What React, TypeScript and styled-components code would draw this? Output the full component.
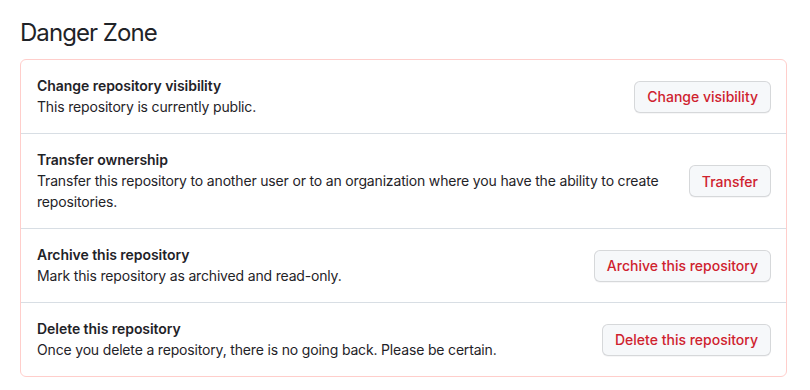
import React from 'react'
import styled, { createGlobalStyle } from 'styled-components'

const GlobalStyle = createGlobalStyle`
  body {
    margin: 0;
    background: #ffffff;
    font-family: Inter, "Noto Sans", "Liberation Sans", sans-serif;
    color: #1f2328;
  }
`

const Page = styled.div`
  padding: 15px 23px 0 20px;
`

const Heading = styled.h2`
  margin: 0 0 8px;
  font-size: 24px;
  font-weight: 400;
  line-height: 36px;
  letter-spacing: -0.95px;
`

const Box = styled.div`
  border: 1px solid #ffcecb;
  border-radius: 6px;
`

const Row = styled.div`
  display: flex;
  align-items: center;
  gap: 16px;
  padding: 16px 15px 16px 16px;
  & + & {
    border-top: 1px solid #d8dee4;
  }
`

const Info = styled.div`
  flex: 1;
  font-size: 14px;
`

const Title = styled.div`
  font-weight: 600;
  line-height: 20px;
  letter-spacing: -0.05px;
`

const Desc = styled.div`
  font-weight: 400;
  line-height: 21px;
  letter-spacing: -0.17px;
`

const DangerButton = styled.button`
  flex-shrink: 0;
  height: 32px;
  padding: 0 12px;
  font-family: inherit;
  font-size: 14px;
  font-weight: 500;
  color: #cf222e;
  background: #f6f8fa;
  border: 1px solid rgba(31, 35, 40, 0.15);
  border-radius: 6px;
  box-shadow: 0 1px 0 rgba(31, 35, 40, 0.04);
  cursor: pointer;
`

const rows = [
  {
    title: 'Change repository visibility',
    desc: 'This repository is currently public.',
    action: 'Change visibility',
  },
  {
    title: 'Transfer ownership',
    desc: 'Transfer this repository to another user or to an organization where you have the ability to create repositories.',
    action: 'Transfer',
  },
  {
    title: 'Archive this repository',
    desc: 'Mark this repository as archived and read-only.',
    action: 'Archive this repository',
  },
  {
    title: 'Delete this repository',
    desc: 'Once you delete a repository, there is no going back. Please be certain.',
    action: 'Delete this repository',
  },
]

const App: React.FC = () => (
  <>
    <GlobalStyle />
    <Page>
      <Heading>Danger Zone</Heading>
      <Box>
        {rows.map(r => (
          <Row key={r.title}>
            <Info>
              <Title>{r.title}</Title>
              <Desc>{r.desc}</Desc>
            </Info>
            <DangerButton>{r.action}</DangerButton>
          </Row>
        ))}
      </Box>
    </Page>
  </>
)

export default App
